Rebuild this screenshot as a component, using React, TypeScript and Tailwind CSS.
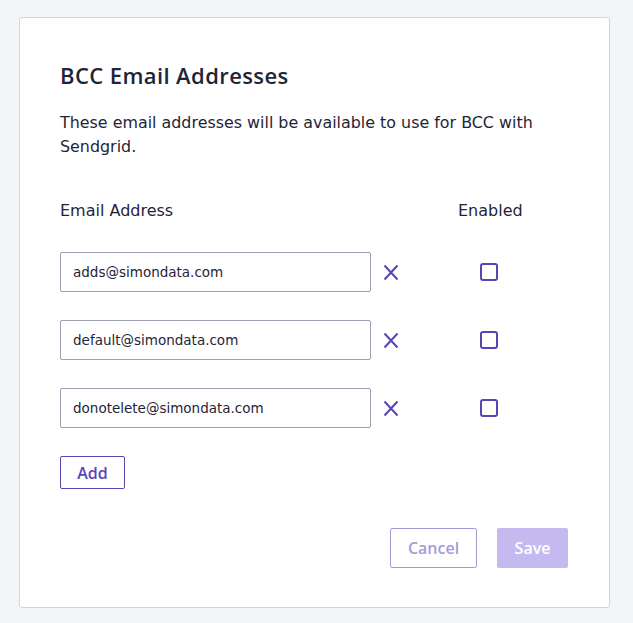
import { useState } from 'react'

const body = { fontFamily: '"DejaVu Sans", Verdana, sans-serif' }
const heading = { fontFamily: '"Open Sans", Lato, sans-serif' }

const App = () => {
  const [emails, setEmails] = useState<string[]>([
    'adds@simondata.com',
    'default@simondata.com',
    'donotelete@simondata.com',
  ])
  const [enabled, setEnabled] = useState<boolean[]>([false, false, false])

  return (
    <div className="min-h-[623px] w-full bg-[#f4f5f7] pt-[17px] pl-[19px]">
      <div className="flex w-[591px] h-[591px] flex-col rounded-[3px] border border-[#d3d5de] bg-white px-[40px] pt-[42px]">
        <h1 style={heading} className="text-[22px] font-semibold tracking-[0.4px] leading-[30px] text-[#1f2538]">
          BCC Email Addresses
        </h1>
        <p style={body} className="mt-[21px] text-[15.9px] leading-[24px] text-[#1f2538]">
          These email addresses will be available to use for BCC with Sendgrid.
        </p>

        <div style={body} className="mt-[42px] flex text-[16px] leading-[20px] text-[#1f2538]">
          <span className="w-[398px]">Email Address</span>
          <span>Enabled</span>
        </div>

        <div className="mt-[31px] flex flex-col gap-[28px]">
          {emails.map((email, i) => (
            <div key={i} className="flex items-center">
              <input
                style={body}
                value={email}
                onChange={(e) => {
                  const next = [...emails]
                  next[i] = e.target.value
                  setEmails(next)
                }}
                className="h-[40px] w-[311px] rounded-[2px] border border-[#9b9fae] bg-white px-[12px] text-[13.5px] text-[#1f2538] focus:outline-none"
              />
              <button
                type="button"
                onClick={() => {
                  setEmails(emails.filter((_, j) => j !== i))
                  setEnabled(enabled.filter((_, j) => j !== i))
                }}
                className="ml-[12px] flex h-[18px] w-[16px] items-center justify-center"
              >
                <svg width="16" height="17" viewBox="0 0 16 17" fill="none">
                  <path d="M1.5 1.5L14.5 15.5M14.5 1.5L1.5 15.5" stroke="#5a43b5" strokeWidth="2" />
                </svg>
              </button>
              <button
                type="button"
                onClick={() => {
                  const next = [...enabled]
                  next[i] = !next[i]
                  setEnabled(next)
                }}
                className={`ml-[81px] h-[18px] w-[18px] rounded-[3px] border-2 border-[#5a43b5] ${enabled[i] ? 'bg-[#5a43b5]' : 'bg-white'}`}
              />
            </div>
          ))}
        </div>

        <button
          type="button"
          style={heading}
          onClick={() => {
            setEmails([...emails, ''])
            setEnabled([...enabled, false])
          }}
          className="mt-[28px] h-[33px] w-[65px] rounded-[2px] border border-[#5a43b5] text-[16px] font-semibold text-[#5a43b5]"
        >
          Add
        </button>

        <div style={heading} className="mt-[39px] flex justify-end gap-[20px] pr-[1px]">
          <button
            type="button"
            className="h-[40px] w-[87px] rounded-[2px] border border-[#a89ad8] text-[16px] font-semibold text-[#a89ad8]"
          >
            Cancel
          </button>
          <button
            type="button"
            className="h-[40px] w-[71px] rounded-[2px] bg-[#c5baf0] text-[16px] font-semibold text-white"
          >
            Save
          </button>
        </div>
      </div>
    </div>
  )
}

export default App
